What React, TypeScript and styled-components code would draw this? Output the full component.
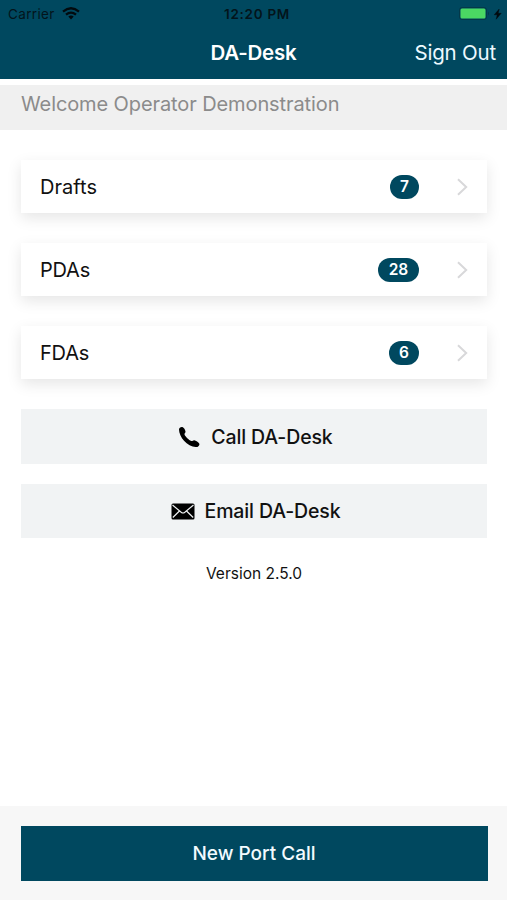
import React from 'react';
import styled, { createGlobalStyle } from 'styled-components';

const NAVY = '#00485f';

const GlobalStyle = createGlobalStyle`
  *, *::before, *::after { box-sizing: border-box; }
  body { margin: 0; background: #fff; }
  button { font: inherit; border: 0; padding: 0; margin: 0; cursor: pointer; }
`;

const Screen = styled.div`
  display: flex;
  flex-direction: column;
  height: 900px;
  width: 100%;
  overflow: hidden;
  background: #fff;
  color: #111;
  font-family: Inter, 'Liberation Sans', sans-serif;
`;

const Header = styled.header`
  height: 79px;
  flex: none;
  background: ${NAVY};
`;

const StatusBar = styled.div`
  display: grid;
  grid-template-columns: 1fr auto 1fr;
  align-items: center;
  height: 27px;
  padding: 0 5px 0 8px;
  color: #03141b;
  font-size: 13.5px;
`;

const Carrier = styled.div`
  display: flex;
  align-items: center;
  gap: 7px;
  letter-spacing: 0.35px;
`;

const Clock = styled.time`
  font-weight: 600;
  letter-spacing: 0.7px;
  padding-left: 4px;
`;

const Power = styled.div`
  display: flex;
  align-items: center;
  justify-content: flex-end;
`;

const NavBar = styled.nav`
  display: grid;
  grid-template-columns: 1fr auto 1fr;
  align-items: center;
  height: 51px;
  padding: 0 11px;
  color: #fff;
`;

const Title = styled.h1`
  grid-column: 2;
  margin: 0;
  font-size: 20.5px;
  font-weight: 600;
  letter-spacing: -0.25px;
`;

const SignOut = styled.button`
  justify-self: end;
  background: none;
  color: #eefaff;
  font-size: 20.5px;
  letter-spacing: -0.2px;
`;

const Welcome = styled.div`
  flex: none;
  height: 45px;
  margin-top: 6px;
  padding: 0 21px;
  background: #f0f0f0;
  color: #8b8b8b;
  font-size: 20px;
  line-height: 38px;
  letter-spacing: -0.1px;
`;

const Content = styled.main`
  flex: 1;
  display: flex;
  flex-direction: column;
  padding: 30px 20px 0 21px;
`;

const CardList = styled.div`
  display: flex;
  flex-direction: column;
  gap: 30px;
`;

const Card = styled.button`
  display: flex;
  align-items: center;
  height: 53px;
  padding: 0 19px;
  background: #fff;
  color: #111;
  box-shadow: 0 5px 14px rgba(0, 0, 0, 0.1);
`;

const CardLabel = styled.span<{ $tracking: number }>`
  flex: 1;
  text-align: left;
  font-size: 20px;
  letter-spacing: ${({ $tracking }) => $tracking}px;
`;

const Badge = styled.span<{ $width: number }>`
  width: ${({ $width }) => $width}px;
  height: 24px;
  margin-right: 38px;
  border-radius: 12px;
  background: ${NAVY};
  color: #fff;
  font-size: 15.5px;
  font-weight: 600;
  line-height: 24px;
  text-align: center;
`;

const Actions = styled.div`
  display: flex;
  flex-direction: column;
  gap: 20px;
  margin-top: 30px;
`;

const ActionButton = styled.button<{ $gap: number }>`
  display: flex;
  align-items: center;
  justify-content: center;
  gap: ${({ $gap }) => $gap}px;
  height: 54.5px;
  padding: 1px 0 0 3px;
  background: #f1f3f4;
  color: #111;
  font-size: 19.5px;
  font-weight: 500;
  letter-spacing: -0.13px;
`;

const Version = styled.p`
  margin: 25px 0 0;
  text-align: center;
  font-size: 15.5px;
  line-height: 21px;
`;

const Footer = styled.footer`
  flex: none;
  height: 94px;
  padding: 20px 19.5px 0 20.5px;
  background: #f7f7f7;
`;

const PrimaryButton = styled.button`
  width: 100%;
  height: 54.5px;
  padding-top: 1px;
  background: ${NAVY};
  color: #f2fbff;
  font-size: 19px;
  font-weight: 500;
`;

const WifiIcon = () => (
  <svg width="18" height="13" viewBox="0 0 18 13" fill="none" stroke="#020a0e" strokeWidth="2.3">
    <path d="M1 4.6Q9-2 17 4.6" />
    <path d="M4 7.7Q9 3.5 14 7.7" />
    <path d="M6.3 9.6Q9 7.4 11.7 9.6L9 12.4Z" fill="#020a0e" stroke="none" />
  </svg>
);

const BatteryIcon = () => (
  <svg width="43" height="14" viewBox="0 0 43 14">
    <rect x="0.5" y="0.5" width="27" height="12" rx="2.5" fill="none" stroke="#043849" />
    <rect x="1.5" y="1.5" width="25" height="10" rx="1.5" fill="#4bd863" />
    <path d="M29 4.5q2 2 0 4z" fill="#043849" />
    <path d="M40.2 2L35.2 7.8H38.2L37.2 12.2L42.2 6.3H39.2Z" fill="#020a0e" stroke="#020a0e" strokeWidth="0.4" />
  </svg>
);

const Chevron = () => (
  <svg width="11" height="18" viewBox="0 0 11 18" fill="none" stroke="#d8d8da" strokeWidth="2">
    <path d="M1 1.2L9.2 9L1 16.8" />
  </svg>
);

const PhoneIcon = () => (
  <svg width="22" height="22" viewBox="0 0 22 22" fill="#000">
    <path d="M1 3.4C1 1.7 3 .7 4.4 1.1C5.9 1.6 7.3 4 7.5 5.5C7.7 6.9 6.2 7.4 6.5 8.4C7.4 10.7 10.8 13.8 13.3 15C14.5 15.5 14.9 14 16.3 14.2C17.9 14.5 20.5 16 21.2 17.4C22 19 20.3 20.8 18.7 21C14.6 21.5 9.6 19 6 14.8C3.1 11.4 1 6.8 1 3.4Z" />
  </svg>
);

const MailIcon = () => (
  <svg width="24" height="17" viewBox="0 0 24 17">
    <rect x="0.5" y="0.5" width="23" height="16" rx="1.5" fill="#000" />
    <path d="M1.5 2L10.2 9.3Q12 10.7 13.8 9.3L22.5 2M1.8 14.5L8.2 8.2M22.2 14.5L15.8 8.2" fill="none" stroke="#eef0f1" strokeWidth="1.2" />
  </svg>
);

const queues = [
  { label: 'Drafts', count: 7, width: 29, tracking: 0.05 },
  { label: 'PDAs', count: 28, width: 41, tracking: -0.2 },
  { label: 'FDAs', count: 6, width: 30, tracking: -0.2 },
];

export default function App() {
  return (
    <Screen>
      <GlobalStyle />
      <Header>
        <StatusBar>
          <Carrier>Carrier <WifiIcon /></Carrier>
          <Clock>12:20 PM</Clock>
          <Power><BatteryIcon /></Power>
        </StatusBar>
        <NavBar>
          <Title>DA-Desk</Title>
          <SignOut>Sign Out</SignOut>
        </NavBar>
      </Header>
      <Welcome>Welcome Operator Demonstration</Welcome>
      <Content>
        <CardList>
          {queues.map(({ label, count, width, tracking }) => (
            <Card key={label}>
              <CardLabel $tracking={tracking}>{label}</CardLabel>
              <Badge $width={width}>{count}</Badge>
              <Chevron />
            </Card>
          ))}
        </CardList>
        <Actions>
          <ActionButton $gap={11}><PhoneIcon />Call DA-Desk</ActionButton>
          <ActionButton $gap={10}><MailIcon />Email DA-Desk</ActionButton>
        </Actions>
        <Version>Version 2.5.0</Version>
      </Content>
      <Footer>
        <PrimaryButton>New Port Call</PrimaryButton>
      </Footer>
    </Screen>
  );
}
